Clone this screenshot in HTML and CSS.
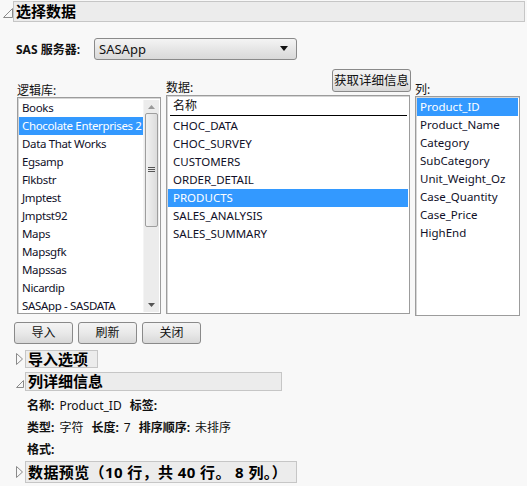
FILE: index.html
```html
<!DOCTYPE html>
<html>
<head>
<meta charset="utf-8">
<link rel="stylesheet" href="styles.css">
</head>
<body>
<div class="outline top">
  <svg class="tri" width="10" height="10" viewBox="0 0 10 10"><path d="M9.5 0.5 V9.5 H0.5 Z" fill="none" stroke="#8a8a8a"/></svg>
  <div class="ohead wide">选择数据</div>
</div>
<div class="panel">
  <div class="server">
    <span class="blabel">SAS 服务器:</span>
    <div class="combo"><span>SASApp</span><svg width="8" height="5" viewBox="0 0 8 5"><path d="M0 0 H8 L4 5 Z" fill="#111"/></svg></div>
  </div>
  <div class="cols">
    <div class="col c1">
      <div class="lab">逻辑库:</div>
      <div class="list l1">
        <div class="items">
          <div class="it">Books</div>
          <div class="it sel">Chocolate Enterprises 2</div>
          <div class="it">Data That Works</div>
          <div class="it">Egsamp</div>
          <div class="it">Flkbstr</div>
          <div class="it">Jmptest</div>
          <div class="it">Jmptst92</div>
          <div class="it">Maps</div>
          <div class="it">Mapsgfk</div>
          <div class="it">Mapssas</div>
          <div class="it">Nicardip</div>
          <div class="it">SASApp - SASDATA</div>
        </div>
        <div class="sbar">
          <svg class="arr" width="7" height="4" viewBox="0 0 7 4"><path d="M0 4 H7 L3.5 0 Z" fill="#9a9a9a"/></svg>
          <div class="thumb"><svg width="7" height="6" viewBox="0 0 7 6"><path d="M0 0.5H7M0 2.5H7M0 4.5H7" stroke="#555" stroke-width="1"/></svg></div>
          <div class="spacer"></div>
          <svg class="arr" width="7" height="4" viewBox="0 0 7 4"><path d="M0 0 H7 L3.5 4 Z" fill="#555"/></svg>
        </div>
      </div>
    </div>
    <div class="col c2">
      <div class="head2"><div class="lab">数据:</div><button class="btn info">获取详细信息</button></div>
      <div class="list l2">
        <div class="colhead">名称</div>
        <div class="it">CHOC_DATA</div>
        <div class="it">CHOC_SURVEY</div>
        <div class="it">CUSTOMERS</div>
        <div class="it">ORDER_DETAIL</div>
        <div class="it sel">PRODUCTS</div>
        <div class="it">SALES_ANALYSIS</div>
        <div class="it">SALES_SUMMARY</div>
      </div>
    </div>
    <div class="col c3">
      <div class="lab">列:</div>
      <div class="list l3">
        <div class="it sel">Product_ID</div>
        <div class="it">Product_Name</div>
        <div class="it">Category</div>
        <div class="it">SubCategory</div>
        <div class="it">Unit_Weight_Oz</div>
        <div class="it">Case_Quantity</div>
        <div class="it">Case_Price</div>
        <div class="it">HighEnd</div>
      </div>
    </div>
  </div>
  <div class="btns">
    <button class="btn act">导入</button>
    <button class="btn act">刷新</button>
    <button class="btn act">关闭</button>
  </div>
</div>
<div class="outline sub o1">
  <svg class="tri" width="7" height="12" viewBox="0 0 7 12"><path d="M0.5 0.5 L6.5 6 L0.5 11.5 Z" fill="none" stroke="#8a8a8a"/></svg>
  <div class="ohead h1">导入选项</div>
</div>
<div class="outline sub o2">
  <svg class="tri" width="8" height="8" viewBox="0 0 8 8"><path d="M7.5 0.5 V7.5 H0.5 Z" fill="none" stroke="#8a8a8a"/></svg>
  <div class="ohead h2">列详细信息</div>
</div>
<div class="details">
  <div class="drow"><b>名称:</b><span>Product_ID</span><b>标签:</b></div>
  <div class="drow"><b>类型:</b><span>字符</span><b>长度:</b><span>7</span><b>排序顺序:</b><span>未排序</span></div>
  <div class="drow"><b>格式:</b></div>
</div>
<div class="outline sub o3">
  <svg class="tri" width="7" height="12" viewBox="0 0 7 12"><path d="M0.5 0.5 L6.5 6 L0.5 11.5 Z" fill="none" stroke="#8a8a8a"/></svg>
  <div class="ohead h3">数据预览（10 行，共 40 行。 8 列。）</div>
</div>
</body>
</html>
```
FILE: styles.css
```css
html, body {
  margin: 0;
  padding: 0;
  background: #f8f8f8;
}
body {
  font-family: "Noto Sans", "Noto Sans CJK SC", sans-serif;
  font-size: 12px;
  color: #111;
  width: 527px;
  height: 486px;
  overflow: hidden;
}
.outline {
  display: flex;
  align-items: center;
}
.top {
  padding-top: 1px;
  padding-left: 3px;
  height: 21px;
}
.top .tri { margin-top: 2px; }
.ohead {
  background: #ececec;
  border: 1px solid #c6c6c6;
  font-weight: bold;
  font-size: 15px;
  line-height: 18px;
  padding-left: 2px;
  box-sizing: border-box;
  color: #000;
  white-space: nowrap;
}
.wide {
  width: 512px;
  height: 21px;
  line-height: 19px;
}
.panel {
  padding-left: 17px;
}
.server {
  display: flex;
  align-items: center;
  margin-top: 15px;
  height: 23px;
}
.blabel {
  font-weight: bold;
  margin-left: -1px;
  width: 78px;
}
.combo {
  width: 203px;
  height: 22px;
  box-sizing: border-box;
  border: 1px solid #8a8a8a;
  border-radius: 3px;
  background: linear-gradient(#f4f4f4, #e6e6e6 50%, #d9d9d9);
  display: flex;
  align-items: center;
  justify-content: space-between;
  padding: 0 8px 0 4px;
  font-size: 13px;
}
.cols {
  display: grid;
  grid-template-columns: 144px 244px 105px;
  column-gap: 5px;
  margin-top: 10px;
  align-items: start;
}
.col { display: flex; flex-direction: column; }
.lab {
  line-height: 16px;
  height: 16px;
  position: relative;
  top: 2px;
}
.c1 { padding-top: 11px; }
.c3 { padding-top: 10px; }
.c3 .lab { top: 2px; }
.head2 {
  display: flex;
  justify-content: space-between;
  align-items: flex-end;
  height: 22px;
  margin-bottom: 3px;
}
.head2 .lab { margin-bottom: -2px; }
.list {
  background: #fff;
  border: 1px solid #9c9c9c;
  box-sizing: border-box;
  box-shadow: inset 1px 1px 0 #d6d6d6;
  font-size: 11.5px;
}
.l1 {
  height: 217px;
  display: flex;
  padding: 1px 1px 1px 1px;
}
.l2 {
  height: 219px;
  padding: 0 1px 1px;
}
.l3 {
  height: 220px;
  padding: 1px 1px 1px;
}
.items { flex: 1; overflow: hidden; min-width: 0; }
.it {
  height: 18px;
  line-height: 18px;
  padding-left: 4px;
  white-space: nowrap;
  overflow: hidden;
  color: #101028;
}
.it.sel {
  background: #3399ff;
  color: #fff;
}
.l1 .it { letter-spacing: -0.35px; padding-left: 3px; }
.l3 .it { padding-left: 3px; }
.l2 .it { padding-left: 5px; }
.colhead {
  height: 19px;
  line-height: 19px;
  border-bottom: 1px solid #000;
  margin: 0 1px 1px 2px;
  padding-left: 3px;
  font-size: 12px;
}
.sbar {
  width: 15px;
  background: #ececec;
  display: flex;
  flex-direction: column;
  align-items: center;
  border-left: 1px solid #f4f4f4;
  margin-top: 1px;
}
.arr { margin: 5px 0; flex: none; }
.thumb {
  width: 13px;
  height: 114px;
  box-sizing: border-box;
  border: 1px solid #9e9e9e;
  border-radius: 2px;
  background: linear-gradient(90deg, #f2f2f2, #dcdcdc);
  display: flex;
  align-items: center;
  justify-content: center;
  margin-top: -1px;
}
.spacer { flex: 1; }
.btn {
  font-family: "Noto Sans", "Noto Sans CJK SC", sans-serif;
  font-size: 12px;
  color: #111;
  border: 1px solid #8a8a8a;
  border-radius: 3px;
  background: linear-gradient(#f4f4f4, #e9e9e9 50%, #d8d8d8);
  padding: 0;
  box-sizing: border-box;
  line-height: 18px;
  white-space: nowrap;
}
.info {
  width: 79px;
  height: 23px;
  font-size: 12.5px;
  margin-right: -1px;
}
.btns {
  display: flex;
  gap: 5px;
  margin-top: 6px;
  margin-left: -3px;
}
.act {
  width: 59px;
  height: 22px;
}
.sub {
  padding-left: 16px;
}
.sub .tri { margin-right: 2px; }
.o1 { margin-top: 6px; }
.h1 { width: 73px; height: 18px; line-height: 16px; }
.o2 { margin-top: 4px; }
.o2 .tri { margin-right: 1px; margin-top: 4px; }
.h2 { width: 257px; height: 19px; line-height: 17px; }
.details {
  padding-left: 27px;
  padding-top: 4px;
}
.drow {
  height: 22px;
  line-height: 22px;
  display: flex;
  gap: 5px;
}
.drow b { font-weight: bold; }
.drow span + b { margin-left: 3px; }
.o3 { margin-top: 0; }
.h3 { width: 272px; height: 22px; line-height: 20px; letter-spacing: 0.4px; }
```
